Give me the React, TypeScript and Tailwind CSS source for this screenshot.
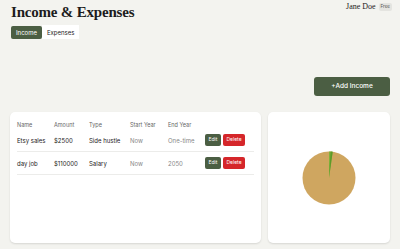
import React from 'react';

const rows = [
  { name: 'Etsy sales', amount: '$2500', type: 'Side hustle', start: 'Now', end: 'One-time' },
  { name: 'day job', amount: '$110000', type: 'Salary', start: 'Now', end: '2050' },
];

function Pie() {
  const cx = 30;
  const cy = 30;
  const r = 26.5;
  const frac = 2500 / 112500;
  const a = frac * 2 * Math.PI;
  const x = cx + r * Math.sin(a);
  const y = cy - r * Math.cos(a);
  return (
    <svg width="60" height="60" viewBox="0 0 60 60">
      <circle cx={cx} cy={cy} r={r} fill="#cfa660" />
      <path d={`M${cx} ${cy} L${cx} ${cy - r} A${r} ${r} 0 0 1 ${x} ${y} Z`} fill="#7fb23a" />
      <path d={`M${cx} ${cy} L${cx + 1.6} ${cy - r} L${x} ${y} Z`} fill="#5e9a2a" />
    </svg>
  );
}

export default function App() {
  return (
    <div
      className="w-[400px] h-[249px] bg-[#f3f3ef] px-[10px] overflow-hidden"
      style={{ fontFamily: 'Inter, "Liberation Sans", sans-serif' }}
    >
      <div className="flex justify-between items-start">
        <h1
          className="text-[15px] font-bold text-[#1c1c1c] leading-none pt-[5px] pl-[1px] tracking-[-0.2px]"
          style={{ fontFamily: '"Liberation Serif", serif' }}
        >
          Income &amp; Expenses
        </h1>
        <div className="flex items-center gap-[3px] pt-[1px] -mr-[2px]">
          <span className="text-[8px] text-[#222]" style={{ fontFamily: '"Liberation Serif", serif' }}>Jane Doe</span>
          <span className="text-[4.5px] bg-[#e4e4e0] text-[#555] px-[2px] py-[1px] rounded-[2px]">Free</span>
        </div>
      </div>

      <div className="flex mt-[6px] ml-[1px]">
        <button className="bg-[#4b5e43] text-white text-[6px] h-[13px] px-[5px] rounded-[2px]">Income</button>
        <button className="bg-white text-[#222] text-[6px] h-[14px] px-[5px] -mt-[1px]">Expenses</button>
      </div>

      <div className="flex justify-end mt-[38px]">
        <button className="bg-[#4b5e43] text-white text-[6.5px] font-medium w-[76px] h-[19px] rounded-[3px]">+Add Income</button>
      </div>

      <div className="flex gap-[7px] mt-[16px]">
        <div className="w-[251px] h-[131px] bg-white rounded-[5px] shadow-[0_1px_2px_rgba(0,0,0,0.12)] px-[7px] pt-[9px]">
          <div className="flex text-[5.5px] text-[#666] h-[8px] items-center">
            <span className="w-[37px]">Name</span>
            <span className="w-[35px]">Amount</span>
            <span className="w-[41px]">Type</span>
            <span className="w-[38px]">Start Year</span>
            <span>End Year</span>
          </div>
          {rows.map((r) => (
            <div key={r.name} className="flex items-center h-[23px] border-b border-[#ececea] text-[6px] text-[#222]">
              <span className="w-[37px]">{r.name}</span>
              <span className="w-[35px]">{r.amount}</span>
              <span className="w-[41px]">{r.type}</span>
              <span className="w-[38px] text-[#888]">{r.start}</span>
              <span className="w-[37px] text-[#888]">{r.end}</span>
              <button className="bg-[#4b5e43] text-white text-[5px] w-[16px] h-[12px] rounded-[2px]">Edit</button>
              <button className="bg-[#d5262a] text-white text-[5px] w-[22px] h-[12px] rounded-[2px] ml-[2px]">Delete</button>
            </div>
          ))}
        </div>
        <div className="w-[122px] h-[131px] bg-white rounded-[5px] shadow-[0_1px_2px_rgba(0,0,0,0.12)] flex items-center justify-center">
          <Pie />
        </div>
      </div>
    </div>
  );
}
